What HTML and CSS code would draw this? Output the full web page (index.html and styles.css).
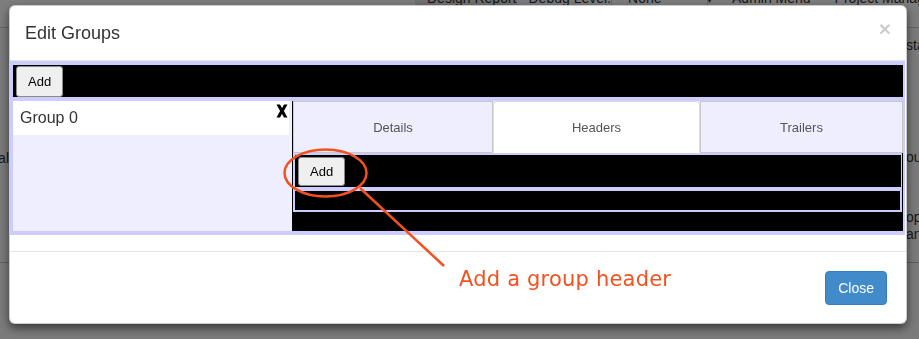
FILE: index.html
```html
<!DOCTYPE html>
<html lang="en">
<head>
  <meta charset="UTF-8">
  <meta name="viewport" content="width=device-width, initial-scale=1.0">
  <title>Edit Groups</title>
  <link rel="stylesheet" href="styles.css">
</head>
<body>
  <!-- page behind the dialog (already dimmed) -->
  <div class="page">
    <nav class="topnav">
      <span class="nav-btn">Design Report</span>
      <span class="nav-label">Debug Level:</span>
      <span class="nav-select">None <b>&#9662;</b></span>
      <span class="nav-item">Admin Menu</span>
      <span class="nav-item">Project Manager</span>
    </nav>
    <div class="page-main">
      <div class="page-left"><p>Journal</p></div>
      <div class="page-right">
        <p class="first">status</p>
        <p class="second">output</p>
        <p class="third">options<br>and</p>
      </div>
    </div>
    <div class="page-rule"></div>
  </div>

  <!-- dialog -->
  <div class="modal">
    <div class="modal-header">
      <h4>Edit Groups</h4>
      <span class="close">&times;</span>
    </div>

    <div class="modal-body">
      <div class="groups">
        <div class="toolbar">
          <button class="add">Add</button>
        </div>
        <div class="groups-row">
          <div class="group-list">
            <div class="group-item">
              <span>Group 0</span>
              <svg class="remove" viewBox="0 0 12 14" aria-hidden="true">
                <path d="M0.5 0.5h3.5l2 3.6 2-3.6h3.5l-3.6 6.5 3.6 6.5h-3.5l-2-3.6-2 3.6h-3.5l3.6-6.5z"/>
              </svg>
            </div>
          </div>
          <div class="group-detail">
            <div class="tabs">
              <div class="tab tab-details">Details</div>
              <div class="tab tab-headers active">Headers</div>
              <div class="tab tab-trailers">Trailers</div>
            </div>
            <div class="pane">
              <div class="pane-bar">
                <button class="add">Add</button>
              </div>
              <div class="pane-list"></div>
            </div>
          </div>
        </div>
      </div>
    </div>

    <div class="modal-footer">
      <button class="btn-close">Close</button>
    </div>
  </div>

  <!-- annotation -->
  <svg class="callout" viewBox="0 0 919 339" aria-hidden="true">
    <ellipse cx="325.5" cy="173" rx="41" ry="23.5"/>
    <line x1="360" y1="188" x2="444" y2="266"/>
    <text x="459" y="286">Add a group header</text>
  </svg>
</body>
</html>
```

FILE: styles.css
```css
:root {
  --lav:#ccccff;
  --lav-light:#eeeeff;
  --callout:#f4511f;
}
*{box-sizing:border-box;margin:0;padding:0}
body{background:#7b7b7b;font-family:"Liberation Sans",Arial,sans-serif;color:#333;width:919px;height:339px;overflow:hidden}

/* dimmed page */
.page{color:#161616;font-size:14px;line-height:20px}
.topnav{display:flex;height:28px;padding-left:415px;background:#7d7d7d;border-bottom:1px solid #666}
.topnav span{margin-top:-12px;height:20px;white-space:nowrap}
.nav-btn{width:110px;padding-left:12px;background:#717171}
.nav-label{width:97px;padding-left:12px;border-right:1px solid #666}
.nav-select{width:96px;padding-left:16px;border-right:1px solid #666}
.nav-select b{margin-left:42px;font-weight:normal;font-size:10px}
.nav-item{width:130px;padding-left:24px}
.page-main{display:flex;height:234px}
.page-left{width:9px;display:flex;justify-content:flex-end;padding-top:120px}
.page-right{margin-left:897px;white-space:nowrap}
.page-right .first{margin-top:7px}
.page-right .second{margin-top:92px}
.page-right .third{margin-top:42px;line-height:17px}
.page-rule{border-top:1px solid #5e5e5e}

/* dialog */
.modal{position:fixed;top:5px;left:9px;width:898px;background:#fff;border:1px solid rgba(0,0,0,.2);border-radius:6px;box-shadow:0 4px 10px rgba(0,0,0,.55)}
.modal-header{display:flex;justify-content:space-between;align-items:flex-start;padding:15px 15px 14px;border-bottom:1px solid #e5e5e5}
.modal-header h4{font-size:18px;font-weight:normal;line-height:25px;color:#333}
.close{font-size:21px;font-weight:bold;line-height:1;color:#000;opacity:.2;margin-top:-3px}

.modal-body{padding:0 1px 16px 0}
.groups{display:flex;flex-direction:column;gap:4px;background:var(--lav);border:4px solid var(--lav);border-left-width:3px;border-right-width:2px}
.toolbar{height:32px;padding:1px 3px 0;background:#000}
.add{height:31px;padding:0 11px;font:13px "Liberation Sans",Arial,sans-serif;color:#000;background:#efefef;border:1px solid #8a8a8a;border-radius:3px}

.groups-row{display:flex;height:130px}
.group-list{width:279px;background:var(--lav-light)}
.group-item{display:flex;justify-content:space-between;align-items:flex-start;height:34px;margin-right:3px;padding:0 1px 0 7px;background:#fff;font-size:16px;line-height:34px;color:#333}
.remove{width:12px;height:14px;margin-top:3px;fill:#000}

.group-detail{flex:1;background:#000;padding-left:1px}
.tabs{display:flex;height:52px;background:var(--lav-light)}
.tab{display:flex;align-items:center;justify-content:center;font-size:13px;color:#555;background:var(--lav-light);border:1px solid #c8c8c8}
.tab.active{background:#fff;border-color:#ddd;border-bottom-color:#fff;border-radius:4px 4px 0 0}
.tab-details{width:200px}
.tab-headers{width:207px}
.tab-trailers{width:203px}

.pane{display:flex;flex-direction:column;gap:4px;margin-right:1px;background:var(--lav);border:2px solid var(--lav);border-right-width:1px}
.pane-bar{height:32px;padding:2px 3px 0;background:#000}
.pane-bar .add{height:29px}
.pane-list{height:19px;background:#000;margin-right:1px}

.modal-footer{padding:19px 19px 18px 20px;border-top:1px solid #e5e5e5;text-align:right}
.btn-close{padding:6px 12px;font:14px/20px "Liberation Sans",Arial,sans-serif;color:#fff;background:#428bca;border:1px solid #357ebd;border-radius:4px}

/* annotation */
.callout{position:fixed;top:0;left:0;width:919px;height:339px;pointer-events:none}
.callout ellipse,.callout line{fill:none;stroke:var(--callout);stroke-width:2.5}
.callout text{font-family:"DejaVu Sans",Verdana,sans-serif;font-size:21px;letter-spacing:.2px;fill:var(--callout)}
```
